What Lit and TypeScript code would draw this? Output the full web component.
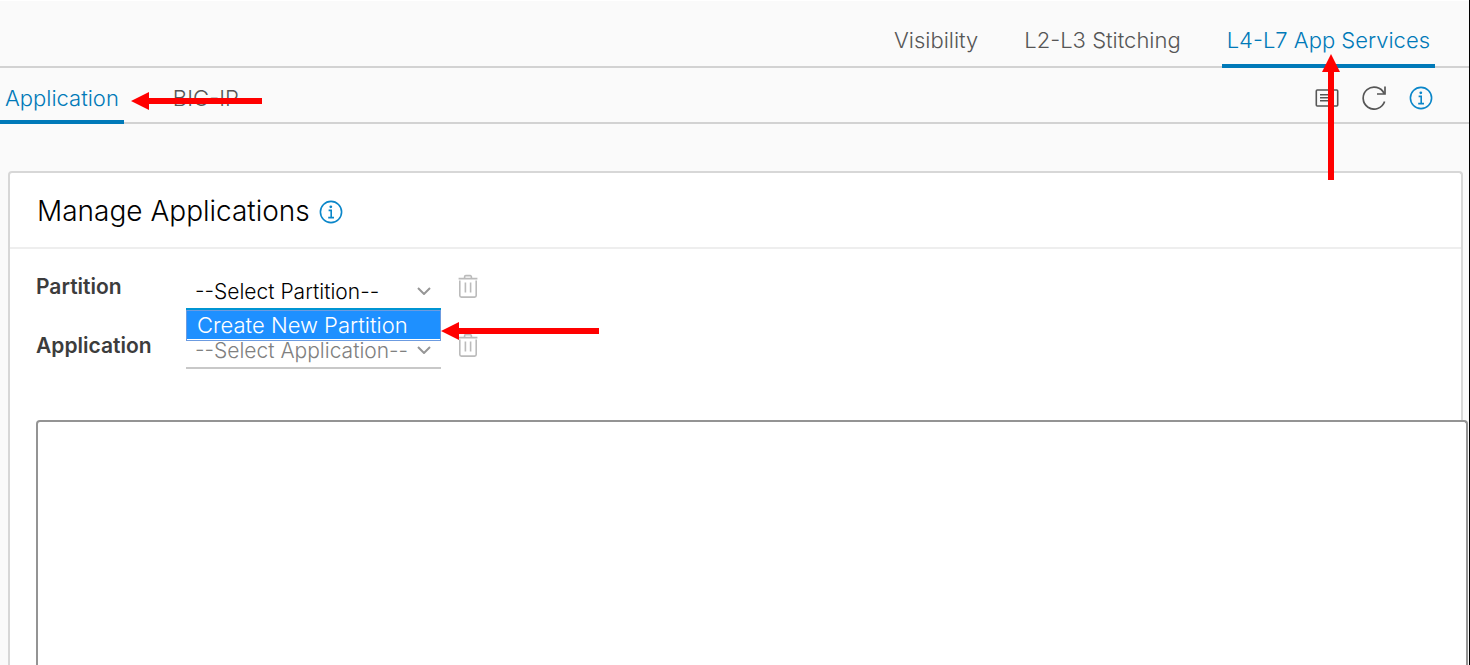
import { LitElement, html, css, svg } from "lit";
import { customElement, property, state } from "lit/decorators.js";

const infoIcon = html`<svg class="icon" viewBox="0 0 24 24" aria-hidden="true" fill="none" stroke="currentColor">
  <circle cx="12" cy="12" r="10.6" stroke-width="1.6"></circle>
  <circle cx="11.8" cy="6.8" r="1.4" fill="currentColor" stroke="none"></circle>
  <path d="M9.6 10.4h2.6v7M9.2 17.6h5.8" stroke-width="1.6"></path>
</svg>`;

const noteIcon = html`<svg class="icon" viewBox="0 0 24 24" aria-hidden="true" fill="none" stroke="currentColor">
  <rect x="1.3" y="4" width="21.4" height="16" rx="1" stroke-width="1.6"></rect>
  <path d="M5 8.7h14M5 11.7h14M5 14.7h9" stroke-width="1.5"></path>
</svg>`;

const refreshIcon = html`<svg class="icon" viewBox="0 0 24 24" aria-hidden="true" fill="none" stroke="currentColor">
  <path d="M22.2 7.6A11 11 0 1 0 22.6 15.6" stroke-width="1.7"></path>
  <path d="M23 0.4v7.6h-8" stroke-width="1.7"></path>
</svg>`;

const trashIcon = html`<svg class="icon" viewBox="0 0 24 24" aria-hidden="true" fill="none" stroke="currentColor">
  <path d="M3.8 6.5v15a1.6 1.6 0 0 0 1.6 1.6h13.2a1.6 1.6 0 0 0 1.6-1.6v-15M2.6 4.6h18.8" stroke-width="1.6"></path>
  <path d="M8.6 4v-1.2a1.2 1.2 0 0 1 1.2-1.2h4.4a1.2 1.2 0 0 1 1.2 1.2V4" stroke-width="1.6"></path>
  <path d="M9.4 8.4v10M14.6 8.4v10" stroke-width="1.6"></path>
</svg>`;

/** Red pointer used to call out a step on the page. */
@customElement("callout-arrow")
export class CalloutArrow extends LitElement {
  @property() direction: "left" | "up" = "left";
  @property({ type: Number }) length = 100;

  static styles = css`
    :host {
      display: block;
      pointer-events: none;
    }
    svg {
      display: block;
      fill: #ff0000;
    }
  `;

  render() {
    const n = this.length;
    return this.direction === "left"
      ? html`<svg width=${n} height="18" aria-hidden="true">
          ${svg`<path d="M0 9L18 0V6H${n}V12H18V18Z"></path>`}
        </svg>`
      : html`<svg width="18" height=${n} aria-hidden="true">
          ${svg`<path d="M9 0L18 18H12V${n}H6V18H0Z"></path>`}
        </svg>`;
  }
}

@customElement("app-root")
export class AppRoot extends LitElement {
  @state() private menuOpen = true;

  static styles = css`
    :host {
      display: flex;
      flex-direction: column;
      box-sizing: border-box;
      height: 100vh;
      overflow: hidden;
      border-right: 1px solid #000;
      background: #fafafa;
      color: #565656;
      font: 300 22px/24px Inter, "Liberation Sans", sans-serif;
    }
    * {
      box-sizing: border-box;
    }
    .icon {
      display: block;
      width: 24px;
      height: 24px;
    }
    .bar {
      display: flex;
      border-bottom: 2px solid #d2d2d2;
    }
    .primary {
      height: 68px;
      justify-content: flex-end;
      gap: 36px;
      padding-right: 34px;
      border-top: 1px solid #fff;
    }
    .secondary {
      height: 56px;
      justify-content: space-between;
      padding-right: 36px;
    }
    .tabs {
      display: flex;
      gap: 44px;
    }
    .tab {
      position: relative;
      display: flex;
      align-items: center;
      margin-bottom: -2px;
      padding: 0 5px;
      border-bottom: 4px solid transparent;
      color: inherit;
      text-decoration: none;
      white-space: nowrap;
    }
    .primary .tab {
      padding-top: 14px;
    }
    .secondary .tab {
      padding-top: 8px;
    }
    .active {
      border-color: #0079b8;
      color: #0079b8;
    }
    .actions {
      display: flex;
      align-items: center;
      gap: 23px;
      padding-top: 6px;
    }
    button {
      padding: 0;
      border: 0;
      background: none;
      color: inherit;
    }
    .blue {
      color: #0a86c9;
    }
    .arrow-up {
      position: absolute;
      z-index: 2;
      top: 53px;
      right: 95px;
    }
    .arrow-tab {
      position: absolute;
      z-index: 2;
      top: 24px;
      left: 131px;
    }
    .arrow-menu {
      position: absolute;
      z-index: 2;
      top: 48px;
      left: 255px;
    }
    .card {
      flex: 1;
      display: flex;
      flex-direction: column;
      margin: 47px 6px 0 8px;
      border: 2px solid #d7d7d7;
      border-bottom: 0;
      border-radius: 4px 4px 0 0;
      background: #fff;
    }
    .head {
      display: flex;
      align-items: center;
      gap: 9px;
      padding: 22px 27px 20px;
      border-bottom: 2px solid #eee;
    }
    h1 {
      margin: 0;
      color: #000;
      font-size: 28px;
      font-weight: 300;
      line-height: 32px;
    }
    .head button {
      padding-top: 2px;
    }
    .body {
      flex: 1;
      display: flex;
      flex-direction: column;
      padding: 25px 26px 0;
    }
    .row {
      display: grid;
      grid-template-columns: 150px 255px auto;
      justify-content: start;
      margin-bottom: 23px;
    }
    .row label {
      padding-top: 1px;
      color: #3c3c3c;
      font-size: 21px;
      font-weight: 600;
    }
    .field {
      position: relative;
      display: grid;
      align-items: center;
    }
    .field select,
    .field > svg {
      grid-area: 1 / 1;
    }
    select {
      appearance: none;
      width: 100%;
      height: 36px;
      padding: 2px 24px 0 9px;
      border: 0;
      border-bottom: 2px solid #c8c8c8;
      border-radius: 0;
      outline: 0;
      background: none;
      color: #000;
      font: inherit;
      font-size: 21px;
    }
    select:disabled {
      opacity: 1;
      color: #808080;
    }
    .open select {
      border-color: #0095d3;
    }
    .chevron {
      justify-self: end;
      width: 14px;
      height: 8px;
      margin: 0 10px 2px 0;
      pointer-events: none;
      fill: none;
      stroke: #969696;
      stroke-width: 2;
    }
    .menu {
      position: absolute;
      z-index: 1;
      top: 36px;
      left: 0;
      width: 100%;
      margin: 0;
      padding: 0 0 1px;
      border: 1px solid #6c9be0;
      background: #fff;
      list-style: none;
    }
    .option {
      padding: 2px 10px;
      background: #1e90ff;
      color: #fff;
    }
    .trash {
      margin-left: 15px;
      align-self: start;
      color: #bbb;
    }
    textarea {
      flex: 1;
      width: calc(100% + 33px);
      margin-top: 28px;
      padding: 12px;
      border: 2px solid #949494;
      border-bottom: 0;
      border-radius: 4px 4px 0 0;
      outline: 0;
      resize: none;
      background: #fff;
      font: inherit;
    }
  `;

  private chevron() {
    return html`<svg class="chevron" viewBox="0 0 14 8" aria-hidden="true"><path d="M1 1l6 6 6-6"></path></svg>`;
  }

  private toggle(e: Event) {
    e.preventDefault();
    this.menuOpen = !this.menuOpen;
  }

  render() {
    return html`
      <nav class="bar primary" aria-label="Sections">
        <a class="tab" href="#visibility">Visibility</a>
        <a class="tab" href="#stitching">L2-L3 Stitching</a>
        <a class="tab active" href="#services" aria-current="page">
          L4-L7 App Services
          <callout-arrow class="arrow-up" direction="up" .length=${126}></callout-arrow>
        </a>
      </nav>
      <div class="bar secondary">
        <nav class="tabs" aria-label="App services">
          <a class="tab active" href="#application" aria-current="page">
            Application
            <callout-arrow class="arrow-tab" .length=${131}></callout-arrow>
          </a>
          <a class="tab" href="#big-ip">BIG-IP</a>
        </nav>
        <div class="actions">
          <button aria-label="Notes">${noteIcon}</button>
          <button aria-label="Refresh">${refreshIcon}</button>
          <button class="blue" aria-label="Information">${infoIcon}</button>
        </div>
      </div>
      <main class="card">
        <header class="head">
          <h1>Manage Applications</h1>
          <button class="blue" aria-label="About applications">${infoIcon}</button>
        </header>
        <div class="body">
          <div class="row">
            <label for="partition">Partition</label>
            <div class="field ${this.menuOpen ? "open" : ""}">
              <select id="partition" @mousedown=${this.toggle}>
                <option>--Select Partition--</option>
              </select>
              ${this.chevron()}
              ${this.menuOpen
                ? html`<ul class="menu" role="listbox" aria-label="Partition">
                    <li class="option" role="option" aria-selected="true">Create New Partition</li>
                  </ul>`
                : ""}
              <callout-arrow class="arrow-menu" .length=${158}></callout-arrow>
            </div>
            <button class="trash" aria-label="Delete partition">${trashIcon}</button>
          </div>
          <div class="row">
            <label for="application">Application</label>
            <div class="field">
              <select id="application" disabled>
                <option>--Select Application--</option>
              </select>
              ${this.chevron()}
            </div>
            <button class="trash" aria-label="Delete application">${trashIcon}</button>
          </div>
          <textarea aria-label="Declaration"></textarea>
        </div>
      </main>
    `;
  }
}
